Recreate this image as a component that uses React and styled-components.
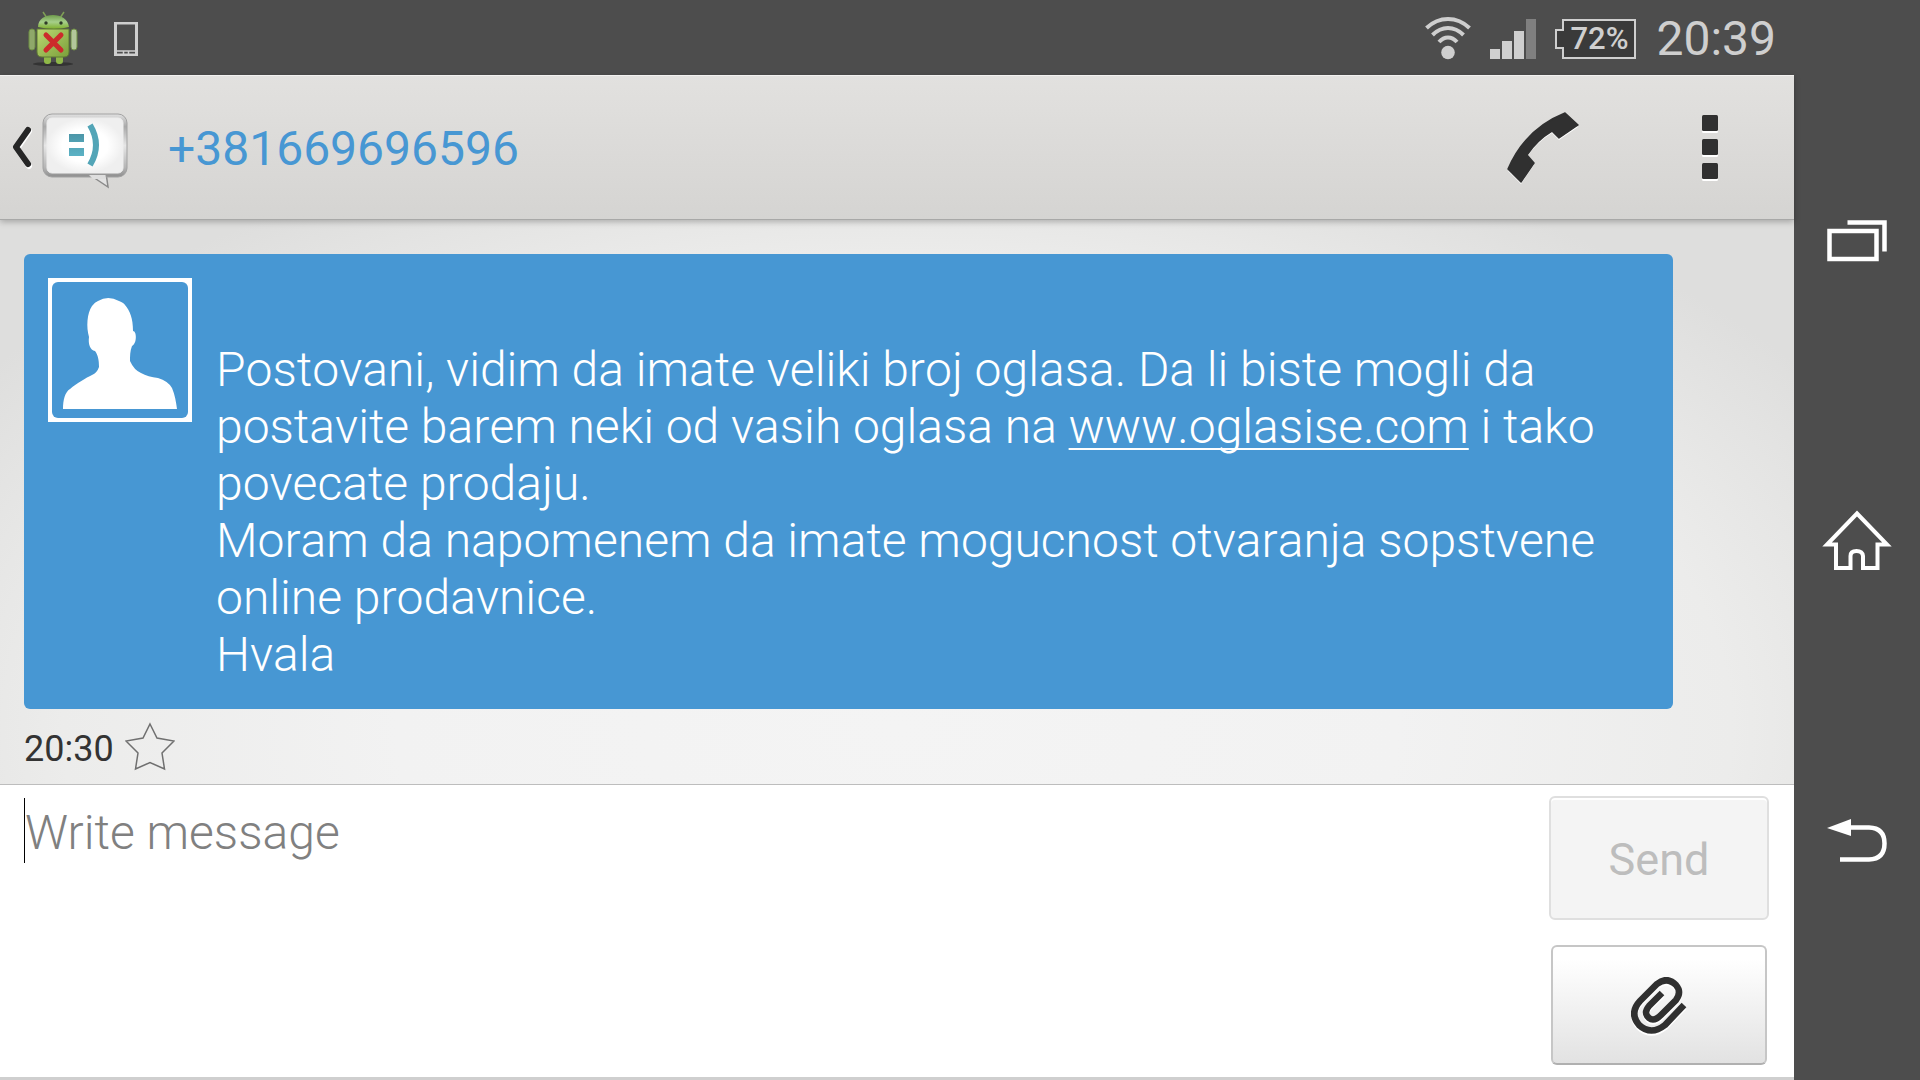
import styled, { createGlobalStyle } from 'styled-components';

const GlobalStyle = createGlobalStyle`
  * {
    box-sizing: border-box;
  }

  body {
    margin: 0;
    font-family: Roboto, "Liberation Sans", sans-serif;
    font-size: 48px;
    background: #4d4d4d;
  }

  svg {
    display: block;
    flex: none;
  }
`;

const Screen = styled.div`
  display: flex;
  min-height: 100vh;
`;

const Main = styled.div`
  flex: 1;
  min-width: 0;
  display: flex;
  flex-direction: column;
`;

const StatusBar = styled.div`
  height: 75px;
  padding: 2px 18px 0 28px;
  display: flex;
  align-items: center;
  justify-content: space-between;
  background: #4d4d4d;
  color: #cfcfcf;
`;

const StatusGroup = styled.div`
  display: flex;
  align-items: center;
  gap: ${({ $gap }) => $gap}px;
`;

const Battery = styled.div`
  position: relative;
  display: flex;
  align-items: center;
  justify-content: center;
  width: 82px;
  height: 40px;
  padding-left: 6px;

  svg {
    position: absolute;
    inset: 0;
  }

  span {
    position: relative;
    font-size: 31px;
    font-weight: 500;
    line-height: 40px;
  }
`;

const Clock = styled.time`
  line-height: 56px;
`;

const Header = styled.header`
  height: 145px;
  padding: 2px 76px 0 12px;
  display: flex;
  align-items: center;
  justify-content: space-between;
  background: linear-gradient(#e2e1df, #d5d4d2);
  border-top: 1px solid #f2f1f0;
  border-bottom: 1px solid #a8a8a7;
  box-shadow: 0 2px 6px rgba(0, 0, 0, 0.25);
  z-index: 1;
`;

const IconButton = styled.button`
  display: flex;
  align-items: center;
  gap: 8px;
  padding: 0;
  border: 0;
  background: none;
  color: inherit;
`;

const Contact = styled.div`
  display: flex;
  align-items: center;
  gap: 40px;
`;

const Number = styled.h1`
  margin: 0;
  font-size: 48px;
  font-weight: 400;
  line-height: 56px;
  color: #4797d3;
`;

const Actions = styled.div`
  display: flex;
  align-items: center;
  gap: 123px;
`;

const Thread = styled.main`
  flex: 1;
  padding: 34px 121px 0 24px;
  background: radial-gradient(ellipse 62% 110% at 50% 90%, #f4f4f4 0%, #f2f2f2 45%, #ececeb 75%, #dededd 100%);
`;

const Bubble = styled.article`
  display: flex;
  gap: 24px;
  padding: 24px 24px 26px;
  border-radius: 6px;
  background: #4797d3;
  color: #fff;
`;

const Avatar = styled.div`
  flex: none;
  width: 144px;
  height: 144px;
  background: #fff;
  padding: 4px;

  svg {
    border-radius: 6px;
    background: #4797d3;
  }
`;

const MessageText = styled.p`
  margin: 0;
  padding-top: 63px;
  font-weight: 300;
  font-kerning: none;
  line-height: 57px;

  a {
    color: inherit;
    text-decoration-thickness: 2px;
    text-underline-offset: 5px;
    text-decoration-skip-ink: none;
  }
`;

const Meta = styled.div`
  display: flex;
  align-items: center;
  gap: 11px;
  height: 75px;
  font-size: 36px;
  color: #333;

  time {
    padding-top: 4px;
  }
`;

const Composer = styled.form`
  height: 296px;
  display: flex;
  gap: 24px;
  padding: 11px 25px 0 24px;
  background: #fff;
  border-top: 1px solid #bdbdbd;
  border-bottom: 3px solid #cfcfcf;
`;

/* the cursor is a one pixel stripe painted at the start of the first line */
const MessageInput = styled.textarea`
  flex: 1;
  min-width: 0;
  padding: 8px 0 0 1px;
  border: 0;
  outline: 0;
  resize: none;
  background: linear-gradient(#000, #000) 0 2px / 1px 65px no-repeat;
  font: 300 48px/57px Roboto, "Liberation Sans", sans-serif;

  &::placeholder {
    color: #808080;
    opacity: 1;
  }
`;

const Buttons = styled.div`
  display: flex;
  flex-direction: column;
  align-items: center;
  gap: 25px;
  width: 220px;
`;

const SendButton = styled.button`
  width: 100%;
  height: 124px;
  padding: 4px 0 0;
  border: 2px solid #dfdfdf;
  border-radius: 6px;
  background: #f4f4f4;
  box-shadow: inset 0 2px #fff;
  font: 400 45px/56px Roboto, "Liberation Sans", sans-serif;
  color: #bdbdbd;
`;

const AttachButton = styled.button`
  display: flex;
  align-items: center;
  justify-content: center;
  width: 216px;
  height: 120px;
  padding: 4px 0 0;
  border: 2px solid #c6c6c6;
  border-bottom-color: #b0b0b0;
  border-radius: 6px;
  background: linear-gradient(#fff 10%, #e2e2e2);
`;

const NavBar = styled.nav`
  flex: none;
  width: 126px;
  padding: 91px 0 89px;
  display: flex;
  flex-direction: column;
  background: #4d4d4d;
  color: #fff;
`;

const NavButton = styled(IconButton)`
  flex: 1;
  justify-content: center;
`;

const AndroidIcon = () => (
  <svg width="50" height="56" viewBox="0 0 50 56">
    <defs>
      <linearGradient id="droid" x1="0" y1="0" x2="1" y2="1">
        <stop offset="0" stopColor="#bcd873" />
        <stop offset="1" stopColor="#7ba03a" />
      </linearGradient>
      <linearGradient id="droidHead" x1="0" y1="0" x2="0" y2="1">
        <stop offset="0" stopColor="#6f9c4c" />
        <stop offset="0.5" stopColor="#a6cf8a" />
        <stop offset="1" stopColor="#7eb02a" />
      </linearGradient>
    </defs>
    <ellipse cx="25" cy="53" rx="20" ry="2" fill="#333" />
    <path d="M15 1l4 6M36 1l-4 6" stroke="#7f9f55" strokeWidth="1.5" />
    <path d="M10 16C10 8 17 4 25 4s15 4 16 12q-15 4-31 0z" fill="url(#droidHead)" />
    <circle cx="18" cy="12" r="1.700" fill="#2e3b28" />
    <circle cx="33" cy="12" r="1.700" fill="#2e3b28" />
    <rect x="1" y="18" width="6" height="21" rx="3" fill="#8fa86a" stroke="#6f8f45" />
    <rect x="43" y="18" width="6" height="21" rx="3" fill="#b2c69a" stroke="#6f8f45" />
    <rect x="16" y="44" width="7" height="9" rx="3" fill="#8fb848" />
    <rect x="28" y="44" width="7" height="9" rx="3" fill="#8fb848" />
    <path d="M9 18h32v23q0 5-5 5H14q-5 0-5-5z" fill="url(#droid)" stroke="#5f7a34" />
    <path d="M18 24l15 15M33 24L18 39" stroke="#cc2b2b" strokeWidth="5" strokeLinecap="round" />
  </svg>
);

const DeviceIcon = () => (
  <svg width="24" height="34" viewBox="0 0 24 34" fill="none" stroke="#cfcfcf">
    <path d="M1.500 1h21v32h-21z" strokeWidth="3" />
    <path d="M2 29h20" strokeWidth="1.5" />
    <path d="M9.500 29v4M14.500 29v4" strokeWidth="1.5" />
    <path d="M0 1h24M0 33.500h24" strokeWidth="2" />
  </svg>
);

const WifiIcon = () => (
  <svg width="46" height="43" viewBox="0 0 46 43" fill="none" stroke="#cfcfcf" strokeWidth="4">
    <path d="M1.500 11Q11 2 23 2t21.500 9" />
    <path d="M7.500 18Q14.500 11 23 11t15.500 7" />
    <path d="M14 25Q18 20.500 23 20.500T32 25" />
    <circle cx="23" cy="35.500" r="6.800" fill="#cfcfcf" stroke="none" />
  </svg>
);

const SignalIcon = () => (
  <svg width="46" height="40" viewBox="0 0 46 40" fill="#cfcfcf">
    <path d="M0 30h10v10H0zM12 22h10v18H12zM24 12h10v28H24z" />
    <path d="M36 0h10v40H36z" fill="#808080" />
  </svg>
);

const MessagingIcon = () => (
  <svg width="86" height="88" viewBox="0 -8 86 88">
    <defs>
      <linearGradient id="rim" x1="0" y1="0" x2="0" y2="1">
        <stop offset="0" stopColor="#e2e2e2" />
        <stop offset="0.2" stopColor="#a9a9a9" />
        <stop offset="0.5" stopColor="#e6e6e6" />
        <stop offset="0.85" stopColor="#b5b5b5" />
        <stop offset="1" stopColor="#8d8d8d" />
      </linearGradient>
      <radialGradient id="face">
        <stop offset="0.6" stopColor="#fff" />
        <stop offset="1" stopColor="#efefef" />
      </radialGradient>
      <linearGradient id="smile" x1="0" y1="0" x2="0" y2="1">
        <stop offset="0" stopColor="#4c96a8" />
        <stop offset="1" stopColor="#5bb2c5" />
      </linearGradient>
    </defs>
    <path d="M45 60L66 74L64 60z" fill="#e3e3e3" stroke="#8a8a8a" strokeWidth="1.5" />
    <rect x="1" y="1" width="84" height="63" rx="9" fill="url(#rim)" stroke="#a2a2a2" />
    <path d="M47 62h16.500l.4 4H51z" fill="#dedede" />
    <rect x="5" y="5" width="76" height="55" rx="5" fill="url(#face)" stroke="#eee" />
    <path d="M27 21h15v8H27zM27 35h15v8H27z" fill="url(#smile)" />
    <path d="M48 12Q60 32 48 52" fill="none" stroke="#53a5b7" strokeWidth="6" />
  </svg>
);

const BackIcon = () => (
  <svg width="22" height="46" viewBox="0 0 22 46" fill="none" strokeWidth="6" strokeLinejoin="round">
    <path d="M17 5L5 22.500L17 40" stroke="#fff" strokeLinecap="round" />
    <path d="M16 4L4 21L16 38" stroke="#262626" strokeLinecap="round" />
  </svg>
);

const phonePath = 'M58 1L71 13L52 26L45 19Q30 28 20 43L27 51L14 70L1 57Q18 17 58 1z';

const PhoneIcon = () => (
  <svg width="72" height="74" viewBox="0 0 72 74">
    <path d={phonePath} transform="translate(0 2)" fill="#fff" />
    <path d={phonePath} fill="#303030" stroke="#303030" strokeWidth="1.5" strokeLinejoin="round" />
  </svg>
);

const MoreIcon = () => (
  <svg width="16" height="68" viewBox="0 0 16 68">
    {[0, 24, 48].map((y) => (
      <g key={y}>
        <rect y={y + 3} width="16" height="15" rx="1.500" fill="#fff" />
        <rect y={y} width="16" height="16" rx="1.500" fill="#303030" />
      </g>
    ))}
  </svg>
);

const PersonIcon = () => (
  <svg width="136" height="136" viewBox="0 0 136 136" fill="#fff">
    <path d="M11 127C11 118 13 110 18 107C25 101 34 96 40 93Q45 91 47 85C47 78 46 73 43 69C38 68 36 62 37 55C34 45 35 31 40 24Q43 20 46 19Q56 13 67 19Q72 21 73 23C78 29 81 36 81 49C85 49 85 62 80 64C78 69 78 74 78 79Q82 88 89 91Q96 95 106 96Q116 99 120 106C123 113 124 120 125 127z" />
  </svg>
);

const StarIcon = () => (
  <svg width="50" height="50" viewBox="0 0 50 50" fill="none" stroke="#707070" strokeWidth="1.5">
    <path d="M25 2L32 16L49 19L37 31L39.500 47L25 40.500L10.500 47L13 31L1 19L18 16z" />
  </svg>
);

const clipPath = 'M31 16L18 29Q12 36 18 41Q23 45 30 38L45 23Q51 15 45 8Q36 -1 26 7L9 24Q-2 36 8 48Q20 59 34 48L53 28';

const ClipIcon = () => (
  <svg width="56" height="60" viewBox="0 0 56 60" fill="none" strokeWidth="6.500">
    <path d={clipPath} stroke="#fff" transform="translate(0 2)" />
    <path d={clipPath} stroke="#303030" />
  </svg>
);

const RecentIcon = () => (
  <svg width="60" height="42" viewBox="0 0 60 42" fill="none" stroke="#fff" strokeWidth="4.5">
    <rect x="2.500" y="11" width="47" height="28" />
    <path d="M20.500 2.500h37v29" />
  </svg>
);

const HomeIcon = () => (
  <svg width="70" height="62" viewBox="0 0 70 62" fill="none" stroke="#fff" strokeWidth="4">
    <path d="M35 3.500L5 34.500H14V58H28.500V46Q28.500 41 34.500 41T41 46V58H55.500V34.500H65z" />
  </svg>
);

const ReturnIcon = () => (
  <svg width="60" height="44" viewBox="0 0 60 44">
    <path d="M22 8.500H42Q57.500 9 57.500 24.500T42 40.500H13" fill="none" stroke="#fff" strokeWidth="4.5" />
    <path d="M0 9L24 0V17z" fill="#fff" />
  </svg>
);

const App = () => (
  <Screen>
    <GlobalStyle />
    <Main>
      <StatusBar>
        <StatusGroup $gap={36}>
          <AndroidIcon />
          <DeviceIcon />
        </StatusGroup>
        <StatusGroup $gap={19}>
          <WifiIcon />
          <SignalIcon />
          <Battery>
            <svg width="82" height="40" viewBox="0 0 82 40">
              <path d="M8 1H80V39H8V29H1V11H8z" fill="#3a3a3a" stroke="#cfcfcf" strokeWidth="2" />
            </svg>
            <span>72%</span>
          </Battery>
          <Clock>20:39</Clock>
        </StatusGroup>
      </StatusBar>

      <Header>
        <Contact>
          <IconButton aria-label="Back">
            <BackIcon />
            <MessagingIcon />
          </IconButton>
          <Number>+381669696596</Number>
        </Contact>
        <Actions>
          <IconButton aria-label="Call">
            <PhoneIcon />
          </IconButton>
          <IconButton aria-label="More options">
            <MoreIcon />
          </IconButton>
        </Actions>
      </Header>

      <Thread>
        <Bubble>
          <Avatar>
            <PersonIcon />
          </Avatar>
          <MessageText>
            Postovani, vidim da imate veliki broj oglasa. Da li biste mogli da postavite barem neki od vasih oglasa
            na <a href="#oglasise">www.oglasise.com</a> i tako povecate prodaju.
            <br />
            Moram da napomenem da imate mogucnost otvaranja sopstvene online prodavnice.
            <br />
            Hvala
          </MessageText>
        </Bubble>
        <Meta>
          <time>20:30</time>
          <IconButton aria-label="Star message">
            <StarIcon />
          </IconButton>
        </Meta>
      </Thread>

      <Composer>
        <MessageInput aria-label="Message" placeholder="Write message" />
        <Buttons>
          <SendButton type="button" disabled>Send</SendButton>
          <AttachButton type="button" aria-label="Attach">
            <ClipIcon />
          </AttachButton>
        </Buttons>
      </Composer>
    </Main>

    <NavBar>
      <NavButton aria-label="Recent apps"><RecentIcon /></NavButton>
      <NavButton aria-label="Home"><HomeIcon /></NavButton>
      <NavButton aria-label="Return"><ReturnIcon /></NavButton>
    </NavBar>
  </Screen>
);

export default App;
